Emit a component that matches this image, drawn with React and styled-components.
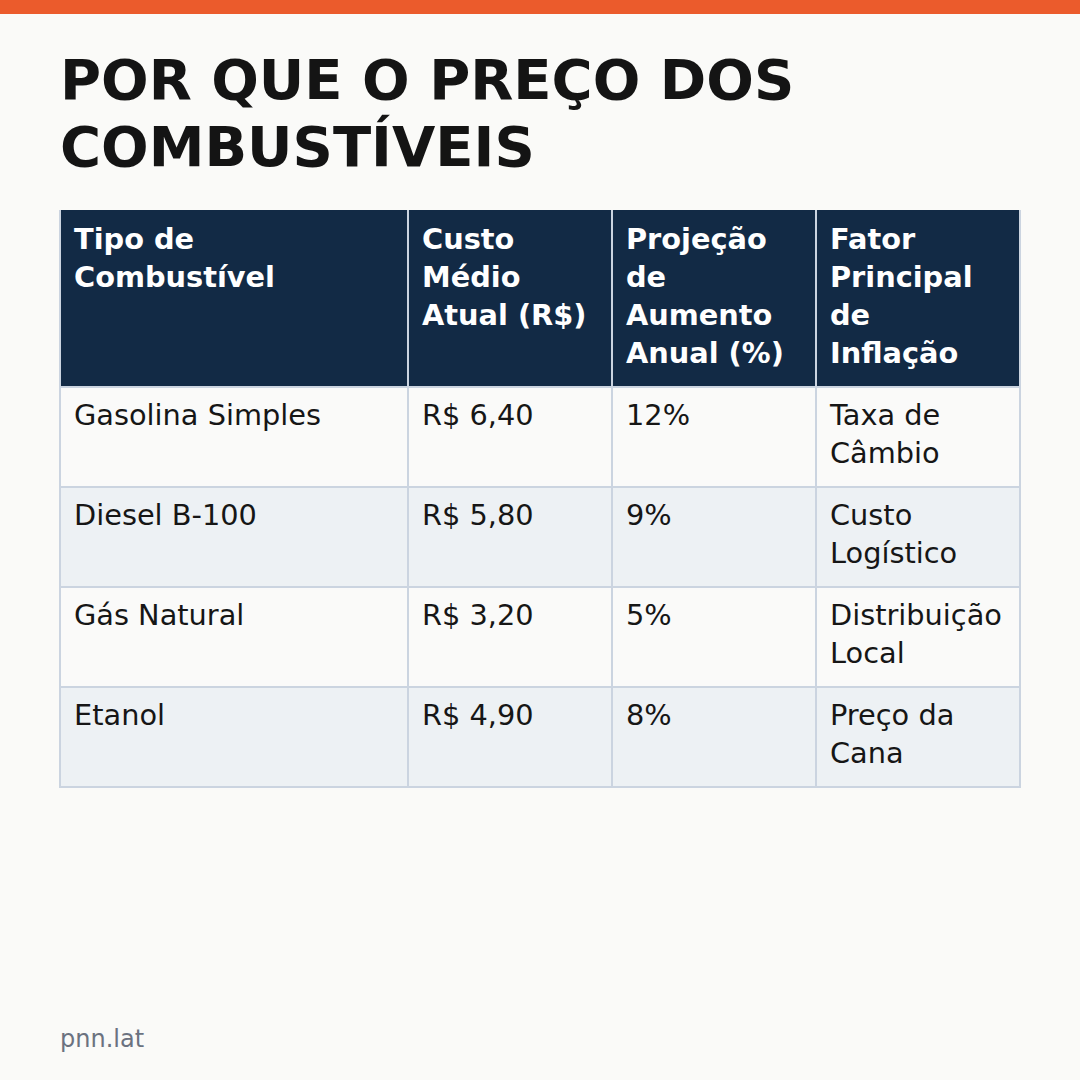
import React from 'react';
import styled, { createGlobalStyle } from 'styled-components';

const GlobalStyle = createGlobalStyle`
  html, body {
    margin: 0;
    padding: 0;
    background-color: #fafaf8;
  }
  * {
    box-sizing: border-box;
  }
`;

const Page = styled.div`
  height: 1080px;
  display: flex;
  flex-direction: column;
  font-family: "DejaVu Sans", Verdana, sans-serif;
  color: #161616;
  background-color: #fafaf8;
`;

const TopBar = styled.div`
  height: 14px;
  flex-shrink: 0;
  background-color: #eb5b2c;
`;

const Content = styled.main`
  display: flex;
  flex-direction: column;
  flex: 1;
  padding: 32px 59px 26px;
`;

const Title = styled.h1`
  margin: 0 0 30px 1px;
  font-size: 56px;
  line-height: 1.2;
  font-weight: 700;
  color: #141414;
`;

const Table = styled.table`
  width: 962px;
  border-collapse: collapse;
  table-layout: fixed;
  font-size: 28.8px;
  line-height: 38px;
`;

const HeadCell = styled.th`
  padding: 10px 13px 14px;
  text-align: left;
  vertical-align: top;
  font-weight: 700;
  color: #ffffff;
  background-color: #122a45;
  border: 2px solid #cbd4e0;
  border-top: none;
`;

const Row = styled.tr`
  background-color: ${(p) => (p.$alt ? '#edf1f4' : '#fafaf9')};
`;

const Cell = styled.td`
  height: 100px;
  padding: 8px 13px 10px;
  vertical-align: top;
  border: 2px solid #cbd4e0;
`;

const Footer = styled.footer`
  margin-top: auto;
  margin-left: 1px;
  font-size: 24px;
  line-height: 1.2;
  color: #6b7280;
`;

const columns = [
  { label: 'Tipo de Combustível', width: 348 },
  { label: 'Custo Médio Atual (R$)', width: 204 },
  { label: 'Projeção de Aumento Anual (%)', width: 204 },
  { label: 'Fator Principal de Inflação', width: 204 },
];

const rows = [
  ['Gasolina Simples', 'R$ 6,40', '12%', 'Taxa de Câmbio'],
  ['Diesel B-100', 'R$ 5,80', '9%', 'Custo Logístico'],
  ['Gás Natural', 'R$ 3,20', '5%', 'Distribuição Local'],
  ['Etanol', 'R$ 4,90', '8%', 'Preço da Cana'],
];

const App = () => (
  <>
    <GlobalStyle />
    <Page>
      <TopBar />
      <Content>
        <Title>
          POR QUE O PREÇO DOS
          <br />
          COMBUSTÍVEIS
        </Title>
        <Table>
          <colgroup>
            {columns.map((c) => (
              <col key={c.label} style={{ width: c.width }} />
            ))}
          </colgroup>
          <thead>
            <tr>
              {columns.map((c) => (
                <HeadCell key={c.label}>{c.label}</HeadCell>
              ))}
            </tr>
          </thead>
          <tbody>
            {rows.map((r, i) => (
              <Row key={r[0]} $alt={i % 2 === 1}>
                {r.map((v) => (
                  <Cell key={v}>{v}</Cell>
                ))}
              </Row>
            ))}
          </tbody>
        </Table>
        <Footer>pnn.lat</Footer>
      </Content>
    </Page>
  </>
);

export default App;
